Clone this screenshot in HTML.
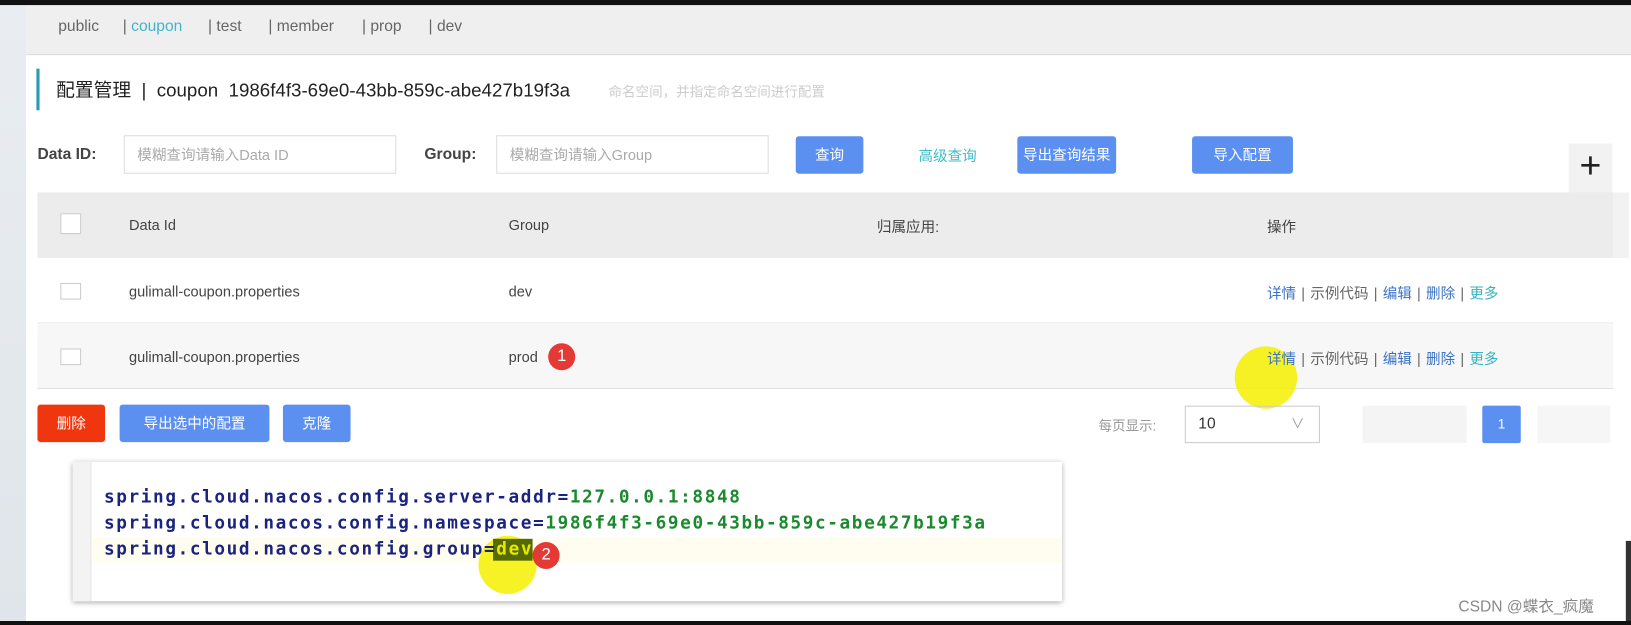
<!DOCTYPE html>
<html><head><meta charset="utf-8"><style>
*{margin:0;padding:0;box-sizing:border-box}
body{width:1631px;height:623px;background:#fff;position:relative;overflow:hidden;font-family:"Liberation Sans","Noto Sans CJK SC",sans-serif;color:#333}
#w{position:absolute;left:0;top:0;width:1568px;height:599px;transform:scale(1.0402);transform-origin:0 0}
.a{position:absolute;white-space:pre}
.btn{position:absolute;background:#5b8ff0;color:#fff;font-size:14px;text-align:center;border-radius:3px}
.inp{position:absolute;border:1px solid #ddd;background:#fff;color:#aaa;font-size:14px;padding-left:12px;line-height:36px}
.ops{position:absolute;font-size:14px;color:#3b73c5;white-space:pre}
.ops i{font-style:normal;color:#666;margin:0 5px}
.ops em{font-style:normal;color:#666}
.ops b{font-weight:normal;color:#34b3c2}
.code{font-family:"DejaVu Sans Mono","Liberation Mono",monospace;font-weight:bold;font-size:17px;letter-spacing:1.55px;color:#1a237e;position:absolute;left:100px;white-space:pre}
.code span{color:#1b8a2e}
.badge{position:absolute;width:26px;height:26px;border-radius:50%;background:#e53935;color:#fff;font-size:16px;text-align:center;line-height:26px}
.nav{position:absolute;top:17px;font-size:15px;color:#666}
</style></head><body><div id="w">
<div class="a" style="left:0;top:0;width:1568px;height:5px;background:#111"></div>
<div class="a" style="left:0;top:5px;width:25px;height:592px;background:linear-gradient(#e9edf1,#dfe5ea)"></div>
<div class="a" style="left:25px;top:5px;width:1543px;height:48px;background:#efefef;border-bottom:1px solid #ddd"></div>
<div class="nav" style="left:56px">public</div>
<div class="nav" style="left:118px">| <span style="color:#3fb6c8">coupon</span></div>
<div class="nav" style="left:200px">| test</div>
<div class="nav" style="left:258px">| member</div>
<div class="nav" style="left:348px">| prop</div>
<div class="nav" style="left:412px">| dev</div>
<div class="a" style="left:35px;top:66px;width:3px;height:40px;background:#2a9bb0"></div>
<div class="a" style="left:54px;top:73px;font-size:18px;color:#222">配置管理  |  coupon  1986f4f3-69e0-43bb-859c-abe427b19f3a</div>
<div class="a" style="left:585px;top:78px;font-size:13px;color:#ccc">命名空间，并指定命名空间进行配置</div>
<div class="a" style="left:36px;top:140px;font-size:15px;font-weight:bold;color:#444">Data ID:</div>
<div class="inp" style="left:119px;top:130px;width:262px;height:37px">模糊查询请输入Data ID</div>
<div class="a" style="left:408px;top:140px;font-size:15px;font-weight:bold;color:#444">Group:</div>
<div class="inp" style="left:477px;top:130px;width:262px;height:37px">模糊查询请输入Group</div>
<div class="btn" style="left:765px;top:131px;width:65px;height:36px;line-height:36px">查询</div>
<div class="a" style="left:883px;top:140px;font-size:14px;color:#3fbcc8">高级查询</div>
<div class="btn" style="left:978px;top:131px;width:95px;height:36px;line-height:36px">导出查询结果</div>
<div class="btn" style="left:1146px;top:131px;width:97px;height:36px;line-height:36px">导入配置</div>
<div class="a" style="left:1508px;top:138px;width:42px;height:48px;background:#f2f2f2;font-size:36px;line-height:42px;text-align:center;color:#222">+</div>
<div class="a" style="left:36px;top:185px;width:1515px;height:63px;background:#ececec"></div>
<div class="a" style="left:1551px;top:185px;width:15px;height:63px;background:#f2f2f2"></div>
<div class="a" style="left:58px;top:205px;width:20px;height:20px;border:1px solid #ccc;background:#fff"></div>
<div class="a" style="left:124px;top:208px;font-size:14px;color:#444">Data Id</div>
<div class="a" style="left:489px;top:208px;font-size:14px;color:#444">Group</div>
<div class="a" style="left:843px;top:208px;font-size:14px;color:#444">归属应用:</div>
<div class="a" style="left:1218px;top:208px;font-size:14px;color:#444">操作</div>
<div class="a" style="left:36px;top:248px;width:1515px;height:63px;background:#fff;border-bottom:1px solid #e6e6e6"></div>
<div class="a" style="left:36px;top:312px;width:1515px;height:62px;background:#f7f7f7;border-bottom:1px solid #e0e0e0"></div>
<div class="a" style="left:58px;top:272px;width:20px;height:16px;border:1px solid #ccc;background:#fff"></div>
<div class="a" style="left:58px;top:335px;width:20px;height:16px;border:1px solid #ccc;background:#fff"></div>
<div class="a" style="left:124px;top:272px;font-size:14px;color:#444">gulimall-coupon.properties</div>
<div class="a" style="left:124px;top:335px;font-size:14px;color:#444">gulimall-coupon.properties</div>
<div class="a" style="left:489px;top:272px;font-size:14px;color:#444">dev</div>
<div class="a" style="left:489px;top:335px;font-size:14px;color:#444">prod</div>
<div class="badge" style="left:527px;top:330px">1</div>
<div class="ops" style="left:1218px;top:272px">详情<i>|</i><em>示例代码</em><i>|</i>编辑<i>|</i>删除<i>|</i><b>更多</b></div>
<div class="a" style="left:1187px;top:333px;width:60px;height:60px;border-radius:50%;background:#f5f000;opacity:.85"></div>
<div class="ops" style="left:1218px;top:335px">详情<i>|</i><em>示例代码</em><i>|</i>编辑<i>|</i>删除<i>|</i><b>更多</b></div>
<div class="btn" style="left:36px;top:389px;width:65px;height:36px;line-height:36px;background:#f0360f">删除</div>
<div class="btn" style="left:115px;top:389px;width:144px;height:36px;line-height:36px">导出选中的配置</div>
<div class="btn" style="left:272px;top:389px;width:65px;height:36px;line-height:36px">克隆</div>
<div class="a" style="left:1056px;top:399px;font-size:13px;color:#999">每页显示:</div>
<div class="a" style="left:1139px;top:390px;width:130px;height:36px;border:1px solid #ccc;font-size:15px;padding:8px 0 0 12px">10<span style="position:absolute;right:14px;top:6px;color:#999;font-size:13px">∨</span></div>
<div class="a" style="left:1310px;top:390px;width:100px;height:36px;background:#f4f4f4"></div>
<div class="btn" style="left:1425px;top:390px;width:37px;height:36px;line-height:36px;font-size:13px;border-radius:2px">1</div>
<div class="a" style="left:1478px;top:390px;width:70px;height:36px;background:#f6f6f6"></div>
<div class="a" style="left:70px;top:444px;width:951px;height:134px;background:#fff;box-shadow:0 1px 5px rgba(0,0,0,.35)"></div>
<div class="a" style="left:70px;top:444px;width:18px;height:134px;background:#f3f3f3;border-right:1px solid #e6e6e6"></div>
<div class="a" style="left:89px;top:517px;width:932px;height:24px;background:#fffcf0"></div>
<div class="code" style="top:468px">spring.cloud.nacos.config.server-addr=<span>127.0.0.1:8848</span></div>
<div class="code" style="top:493px">spring.cloud.nacos.config.namespace=<span>1986f4f3-69e0-43bb-859c-abe427b19f3a</span></div>
<div class="a" style="left:460px;top:515px;width:56px;height:56px;border-radius:50%;background:#f5f000;opacity:.85"></div>
<div class="a" style="left:474px;top:518px;width:38px;height:21px;background:#556b00"></div>
<div class="code" style="top:518px">spring.cloud.nacos.config.group=<span style="color:#e8e800">dev</span></div>
<div class="badge" style="left:512px;top:521px">2</div>
<div class="a" style="left:1402px;top:572px;font-size:15px;color:#888">CSDN @蝶衣_疯魔</div>
<div class="a" style="left:1563px;top:520px;width:5px;height:77px;background:#333"></div>
<div class="a" style="left:0;top:597px;width:1568px;height:4px;background:#111"></div>
</div></body></html>
